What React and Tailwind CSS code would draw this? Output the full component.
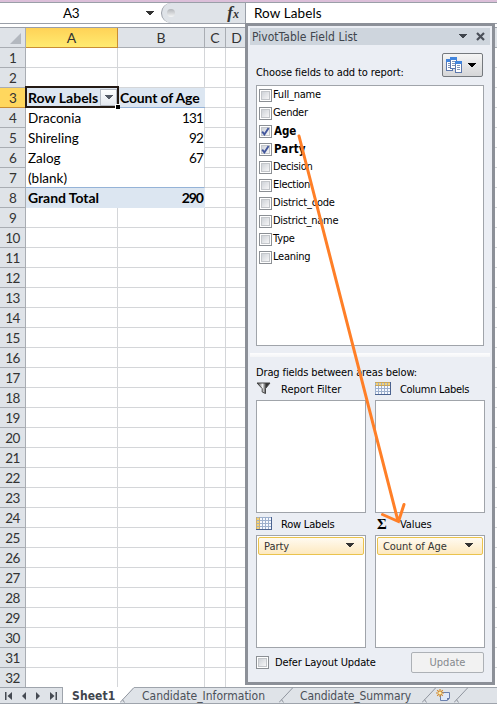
import React from 'react';

const CALIBRI = "font-['Lato','Noto_Sans',sans-serif]";
const TAHOMA = "font-['DejaVu_Sans_Condensed','DejaVu_Sans',sans-serif] [font-stretch:condensed]";

const ROWS = {
  4: ['Draconia', '131'],
  5: ['Shireling', '92'],
  6: ['Zalog', '67'],
  7: ['(blank)', ''],
};

const FIELDS = [
  ['Full_name', 'tracking-[-0.23px]'],
  ['Gender', 'tracking-[-0.3px]'],
  ['Age', 'text-[11.5px] tracking-[-0.1px]'],
  ['Party', 'text-[11.5px] tracking-[0.1px]'],
  ['Decision', 'tracking-[-0.35px]'],
  ['Election', 'tracking-[-0.3px]'],
  ['District_code', 'tracking-[-0.2px]'],
  ['District_name', 'tracking-[-0.25px]'],
  ['Type', 'tracking-[-0.2px]'],
  ['Leaning', 'tracking-[-0.25px]'],
];

function Caret({ className = '' }) {
  return (
    <svg className={className} width="8" height="5" viewBox="0 0 8 5" shapeRendering="crispEdges">
      <path d="M0 0h8L4 4.5z" fill="currentColor" />
    </svg>
  );
}

function FormulaBar() {
  return (
    <div className="flex h-[24px] shrink-0 border-t-2 border-[#dcbfd9] bg-[#dfe3e8]">
      <div className="flex h-[22px] w-[161px] shrink-0 items-center border-y border-[#9a9fa8] bg-white">
        <span className="w-[142px] text-center text-[13.5px] leading-5 tracking-[-0.4px]">A3</span>
        <Caret className="ml-[4px] text-[#333]" />
      </div>
      <div className="flex h-[22px] w-[84px] shrink-0 items-center border-y border-[#9a9fa8] bg-white">
        <div className="flex h-5 w-full items-center justify-between rounded-l-full border-l border-[#9a9fa8] bg-[#dfe3e8] pr-[6px] pl-[5px]">
          <span className="h-[8px] w-[8px] rounded-full bg-linear-to-b from-[#b3b6ba] to-[#f5f6f7]" />
          <span className="font-['Liberation_Serif',serif] text-[17px] leading-4 font-bold text-[#333] italic">
            f<span className="text-[12px]">x</span>
          </span>
        </div>
      </div>
      <div className="flex h-[22px] flex-1 items-center border-y border-l border-[#9a9fa8] bg-white pl-[8px]">
        <span className="text-[13.5px] leading-5 tracking-[0.1px]">Row Labels</span>
      </div>
    </div>
  );
}

function Row({ n }) {
  const data = ROWS[n];
  const band = n === 3 || n === 8;
  return (
    <div className="flex h-5 shrink-0">
      <div
        className={`w-[26px] shrink-0 border-r border-b text-center text-[13.5px] leading-[20px] tracking-[-0.7px] text-[#333] ${
          n === 3 ? 'border-[#c98d34] bg-[#ffd75e]' : 'border-[#a9adb3] bg-[#dfe3e8]'
        }`}
      >
        {n}
      </div>
      {band ? (
        <div
          className={`flex w-[179px] shrink-0 border-b bg-[#dce6f1] text-[14px] leading-[20px] font-bold ${
            n === 3 ? 'border-[#95b3d7]' : 'border-[#dce6f1]'
          }`}
        >
          <span className={`w-[92px] pl-[2px] whitespace-nowrap ${n === 3 ? 'tracking-[0px]' : 'tracking-[-0.05px]'}`}>
            {n === 3 ? 'Row Labels' : 'Grand Total'}
          </span>
          <span className={`flex-1 whitespace-nowrap ${n === 3 ? 'pl-[2px] tracking-[-0.17px]' : 'pr-[2px] text-right tracking-[-1px]'}`}>
            {n === 3 ? 'Count of Age' : '290'}
          </span>
        </div>
      ) : data ? (
        <div
          className={`flex w-[179px] shrink-0 justify-between border-r border-r-[#d4d6d9] pr-[1px] pl-[2px] text-[13.5px] leading-[20px] ${
            n === 7 ? 'border-b border-b-[#95b3d7]' : ''
          }`}
        >
          <span>{data[0]}</span>
          <span className="tracking-[-0.8px]">{data[1]}</span>
        </div>
      ) : (
        <>
          <div className="w-[92px] shrink-0 border-r border-b border-[#d4d6d9]" />
          <div className="w-[87px] shrink-0 border-r border-b border-[#d4d6d9]" />
        </>
      )}
      <div className="w-[21px] shrink-0 border-r border-b border-[#d4d6d9]" />
      <div className="flex-1 border-b border-[#d4d6d9]" />
    </div>
  );
}

function Sheet() {
  return (
    <div className={`flex h-[687px] w-full flex-col overflow-hidden bg-white text-black ${CALIBRI}`}>
      <FormulaBar />
      <div className="h-[3px] shrink-0 bg-white" />
      <div className="flex h-[21px] shrink-0 border-t border-[#9a9fa8] text-center text-[14px] leading-[20px] text-[#333]">
        <div className="flex w-[26px] items-end justify-end border-r border-b border-[#a9adb3] bg-[#dfe3e8] pr-1 pb-[3px]">
          <svg width="11" height="11" viewBox="0 0 11 11">
            <path d="M11 0v11H0z" fill="#b3b8bf" />
          </svg>
        </div>
        <div className="w-[92px] border-r border-b border-[#c98d34] bg-linear-to-b from-[#ffd257] to-[#ffeb70]">A</div>
        <div className="w-[87px] border-r border-b border-[#a9adb3] bg-[#dfe3e8]">B</div>
        <div className="w-[21px] border-r border-b border-[#a9adb3] bg-[#dfe3e8]">C</div>
        <div className="w-[21px] border-b border-[#a9adb3] bg-[#dfe3e8]">D</div>
        <div className="flex-1 border-b border-[#a9adb3] bg-[#dfe3e8]" />
      </div>
      {Array.from({ length: 32 }, (_, i) => (
        <Row key={i} n={i + 1} />
      ))}
    </div>
  );
}

function Selection() {
  return (
    <div className="absolute top-[86px] left-[25px] flex h-[22px] w-[94px] justify-end border-2 border-[#241a14] pt-px">
      <div className="flex h-[17px] w-[17px] items-center justify-center border border-[#b4bac3] bg-linear-to-b from-white to-[#e4e8ee]">
        <Caret className="text-[#555b66]" />
      </div>
      <div className="absolute -right-[3px] -bottom-[3px] h-[5px] w-[5px] border-t border-l border-white bg-black" />
    </div>
  );
}

function Check({ on }) {
  return (
    <span className="flex h-[13px] w-[13px] shrink-0 items-center justify-center border border-[#8b8f94] bg-white">
      <span className="flex h-[9px] w-[9px] items-center justify-center border border-[#c3c6ca] bg-linear-to-br from-[#cfd3d8] to-[#f6f6f7]">
        {on && (
          <svg className="shrink-0" width="9" height="9" viewBox="0 0 9 9">
            <path d="M1.2 4.6 3.4 7.4 7.6 1" fill="none" stroke="#42569c" strokeWidth="1.9" />
          </svg>
        )}
      </span>
    </span>
  );
}

function GridIcon({ side }) {
  return (
    <svg className="mb-[2px]" width="16" height="13" viewBox="0 0 16 13" shapeRendering="crispEdges">
      <rect width="16" height="13" fill="#9db0cd" />
      <path d="M15 0h1v13H0v-1h15z" fill="#4b6390" />
      {[1, 4, 7, 10].map((y) =>
        [1, 4, 7, 10, 13].map((x) => (
          <rect
            key={`${x}-${y}`}
            x={x}
            y={y}
            width="2"
            height="2"
            fill={(side === 'top' ? y === 1 : x === 1) ? '#f3d27a' : '#f6f9ff'}
          />
        )),
      )}
      {side === 'top' ? <path d="M0 0h15v1H0zM0 3h15v1H0z" fill="#c9a65c" /> : <path d="M0 0h1v12H0zM3 0h1v12H3z" fill="#c9ad70" />}
    </svg>
  );
}

function FunnelIcon() {
  return (
    <svg className="mb-[2px]" width="16" height="13" viewBox="0 0 16 13">
      <defs>
        <linearGradient id="funnel">
          <stop offset="0.1" stopColor="#555" />
          <stop offset="0.42" stopColor="#f4f4f4" />
          <stop offset="0.7" stopColor="#333" />
        </linearGradient>
      </defs>
      <path d="M1 1h13L9.500 6.600v4.900L6.200 10V6.600z" fill="url(#funnel)" stroke="#444" strokeWidth="1" />
    </svg>
  );
}

function FieldsIcon() {
  return (
    <svg width="16" height="17" viewBox="0 0 16 17" shapeRendering="crispEdges">
      {[[0, 2], [4, 0], [9, 4]].map(([x, y]) => (
        <g key={x}>
          <rect x={x} y={y} width="7" height="12" fill="#5b77ad" />
          <rect x={x + 1} y={y + 3} width="5" height="8" fill="#fff" />
          <rect x={x} y={y} width="7" height="3" fill="#4285dd" />
          <path d={`M${x + 2} ${y + 4}h3v1h-3zM${x + 2} ${y + 6}h3v1h-3zM${x + 2} ${y + 8}h3v1h-3z`} fill="#8195b8" />
        </g>
      ))}
    </svg>
  );
}

function Area({ icon, title, pill, tracking }) {
  return (
    <div className="flex w-[110px] flex-col">
      <div className="flex h-[22px] items-center">
        <span className="flex w-[25px] shrink-0">{icon}</span>
        <span className={`pt-px text-[11px] whitespace-nowrap ${tracking}`}>{title}</span>
      </div>
      <div className="h-[113px] border border-[#a0a4aa] bg-white p-px">
        {pill && (
          <div className="flex h-[18px] items-center justify-between rounded-[2px] border border-[#eac34d] bg-linear-to-b from-[#fffaf0] to-[#fde9bf] pr-[9px] pl-[5px] text-[#333]">
            <span className="pt-px text-[11px] tracking-[-0.05px] whitespace-nowrap">{pill}</span>
            <Caret className="mb-[2px] text-[#333]" />
          </div>
        )}
      </div>
    </div>
  );
}

function FieldList() {
  return (
    <div
      className={`absolute top-[23px] left-[245px] flex h-[662px] w-[250px] flex-col border-3 border-[#8c9098] bg-[#ebeef4] text-[11px] leading-[14px] text-black ${TAHOMA}`}
    >
      <div className="mx-[2px] mt-[2px] flex h-[17px] shrink-0 items-center bg-[#ced5dd] pr-[5px] pl-[2px] text-[#40454d]">
        <span className="flex-1 pt-px text-[12px] tracking-[0.03px]">PivotTable Field List</span>
        <Caret className="mr-[9px] text-[#40454d]" />
        <svg width="9" height="9" viewBox="0 0 9 9">
          <path d="m1 1 7 7M8 1 1 8" stroke="#4a4f58" strokeWidth="2.2" />
        </svg>
      </div>
      <div className="flex h-[40px] shrink-0 justify-between pt-[8px] pr-[9px] pl-[8px]">
        <span className="pt-[13px] tracking-[-0.1px] whitespace-nowrap">Choose fields to add to report:</span>
        <div className="flex h-[24px] w-[41px] items-center justify-between rounded-[2px] border border-[#75797e] bg-linear-to-b from-[#f5f5f5] to-[#d5d6d8] pr-[6px] pl-[3px]">
          <FieldsIcon />
          <Caret />
        </div>
      </div>
      <div className="ml-[8px] flex h-[261px] w-[228px] shrink-0 flex-col border border-[#a0a4aa] bg-white pl-[2px]">
        {FIELDS.map(([name, tracking]) => {
          const on = name === 'Age' || name === 'Party';
          return (
            <div key={name} className={`flex h-[18px] items-center gap-px ${on ? 'font-bold' : ''}`}>
              <Check on={on} />
              <span className={`${tracking} ${on ? 'pl-px' : ''}`}>{name}</span>
            </div>
          );
        })}
      </div>
      <div className="mx-[2px] mt-[7px] h-[4px] shrink-0 bg-linear-to-b from-[#fdfdfe] to-[#f4f5f7]" />
      <span className="mt-[9px] ml-[8px] h-[12px] shrink-0 tracking-[-0.13px] whitespace-nowrap">Drag fields between areas below:</span>
      <div className="ml-[8px] grid grid-cols-[110px_110px] gap-x-[9px]">
        <Area icon={<FunnelIcon />} title="Report Filter" tracking="tracking-[0px]" />
        <Area icon={<GridIcon side="top" />} title="Column Labels" tracking="tracking-[-0.3px]" />
        <Area icon={<GridIcon side="left" />} title="Row Labels" pill="Party" tracking="tracking-[-0.2px]" />
        <Area
          icon={<span className="pl-[2px] font-['Liberation_Serif',serif] text-[15px] font-bold">Σ</span>}
          title="Values"
          pill="Count of Age"
          tracking="tracking-[-0.1px]"
        />
      </div>
      <div className="mt-[4px] flex h-[21px] items-center pr-[8px] pl-[8px]">
        <Check />
        <span className="flex-1 pl-[6px] tracking-[-0.12px] whitespace-nowrap">Defer Layout Update</span>
        <button className="h-[21px] w-[73px] rounded-[2px] border border-[#adb1b6] bg-[#f2f2f2] text-[#85898e]">Update</button>
      </div>
    </div>
  );
}

function NavIcon({ flip, bar }) {
  return (
    <svg className={flip ? '-scale-x-100' : ''} width="8" height="8" viewBox="0 0 8 8">
      <path d={bar ? 'M0 0h1.5v8H0zM7 0v8L2.5 4z' : 'M6 0v8L2 4z'} fill="#454a52" />
    </svg>
  );
}

function TabBar() {
  return (
    <div className={`flex h-[18px] w-full flex-col bg-white ${TAHOMA}`}>
      <div className="flex h-[17px] border-y border-[#9ea4ac] bg-[#dfe3e8]">
        <div className="flex w-[63px] shrink-0 items-center justify-between border-r border-[#9ea4ac] bg-[#dfe3e8] pr-[5px] pl-[5px]">
          <NavIcon bar />
          <NavIcon />
          <NavIcon flip />
          <NavIcon bar flip />
        </div>
        <div className="-mt-px h-[16px] w-[57px] shrink-0 bg-white pl-[9px] text-[12px] leading-[18px] font-bold tracking-[0.1px] text-[#40454d]">
          Sheet1
        </div>
        <Slant active />
        <div className="w-[145px] shrink-0 pl-[8px] text-[12px] leading-[16px] whitespace-nowrap text-[#4b5058]">Candidate_Information</div>
        <Slant />
        <div className="w-[129px] shrink-0 pl-[7px] text-[12px] leading-[16px] tracking-[-0.1px] whitespace-nowrap text-[#4b5058]">Candidate_Summary</div>
        <Slant />
        <div className="flex w-[18px] shrink-0 items-center">
          <svg width="15" height="13" viewBox="0 0 15 13">
            <path d="M4.5 3.500h9v5.700l-2.200 2.300H4.500z" fill="#dfe8f8" stroke="#6b80ae" />
            <path d="m13.500 9-2.300 2.500V9z" fill="#53699b" />
            <path d="M4 0v8M0 4h8M1.200 1.200l5.600 5.600M6.800 1.200 1.200 6.800" stroke="#d48a2b" strokeWidth="1.2" />
            <circle cx="4" cy="4" r="1.6" fill="#fff0b0" />
          </svg>
        </div>
        <Slant last />
        <div className="flex-1 bg-[#dfe3e8]" />
      </div>
    </div>
  );
}

function Slant({ active }) {
  return (
    <svg className="-mt-px h-[16px] w-[14px] shrink-0" viewBox="0 0 14 16">
      <path d="M0 0h14L0 16z" fill={active ? '#fff' : '#dfe3e8'} />
      <path d="M14 0v16H0z" fill="#dfe3e8" />
      <path d="M0 .5h14" stroke={active ? '#fff' : '#9ea4ac'} />
      <path d="M14 .5 0 15.5" stroke="#8f959e" fill="none" />
      <path d="M2.500 12.500 4.500 15.500" stroke="#8f959e" fill="none" />
    </svg>
  );
}

export default function App() {
  return (
    <div className="relative h-[705px] w-[497px] overflow-hidden bg-white">
      <Sheet />
      <TabBar />
      <Selection />
      <FieldList />
      <svg className="absolute top-0 left-0" width="497" height="705" viewBox="0 0 497 705">
        <path d="M299 136 398 521M382.500 514.500 398.500 521.500 404 504.500" fill="none" stroke="#ff7f27" strokeWidth="3" strokeLinecap="round" />
      </svg>
    </div>
  );
}
